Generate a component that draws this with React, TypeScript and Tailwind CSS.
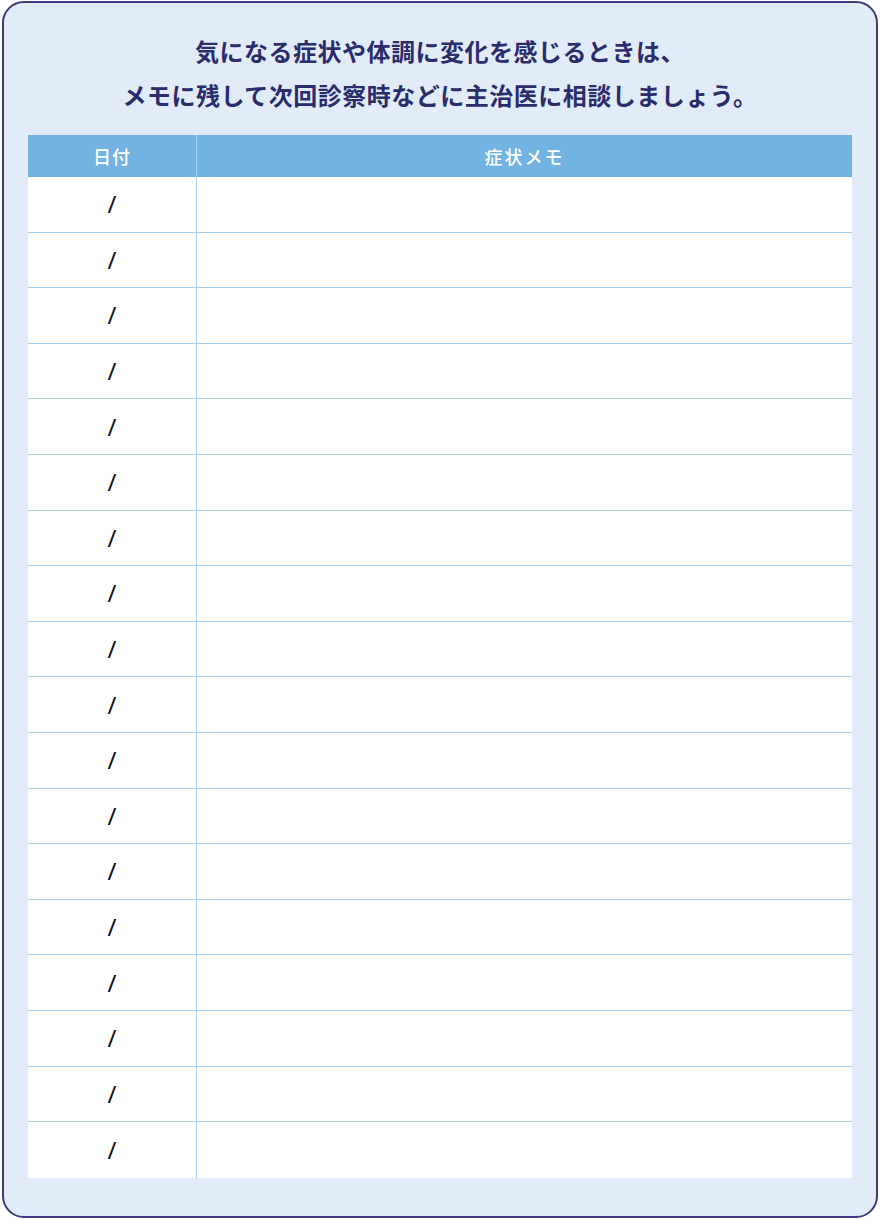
import React from "react";

const rows = Array.from({ length: 18 }, (_, i) => i);

export default function App() {
  return (
    <div className="w-[880px] h-[1220px] bg-white px-[2px] pt-[1px] pb-[2px]">
      <div
        className="h-full rounded-[22px] border-2 border-[#3d3a7d] bg-[#e1ecf8] px-[24px] pt-[26px] flex flex-col"
        style={{ fontFamily: '"Noto Sans CJK JP", "Noto Sans", sans-serif' }}
      >
        <div className="text-center text-[24px] leading-[44px] font-bold tracking-[0.5px] text-[#2b2c6b]">
          <p>気になる症状や体調に変化を感じるときは、</p>
          <p>メモに残して次回診察時などに主治医に相談しましょう。</p>
        </div>
        <div className="mt-[18px] flex flex-col">
          <div className="flex h-[42px] bg-[#72b3e1] text-white text-[18px] font-medium">
            <div className="w-[169px] flex items-center justify-center border-r border-[#a9d3f0] tracking-[1px]">
              日付
            </div>
            <div className="flex-1 flex items-center justify-center tracking-[2px]">
              症状メモ
            </div>
          </div>
          {rows.map((i) => (
            <div
              key={i}
              className={
                "flex h-[55.6px] bg-white " +
                (i < 17 ? "border-b-[1.5px] border-[#a6cff0]" : "")
              }
            >
              <div
                className="w-[169px] flex items-center justify-center border-r-[1.5px] border-[#a6cff0] text-[24px] font-normal text-[#111122]"
                style={{ fontFamily: '"Noto Sans", sans-serif' }}
              >
                /
              </div>
              <div className="flex-1" />
            </div>
          ))}
        </div>
      </div>
    </div>
  );
}
